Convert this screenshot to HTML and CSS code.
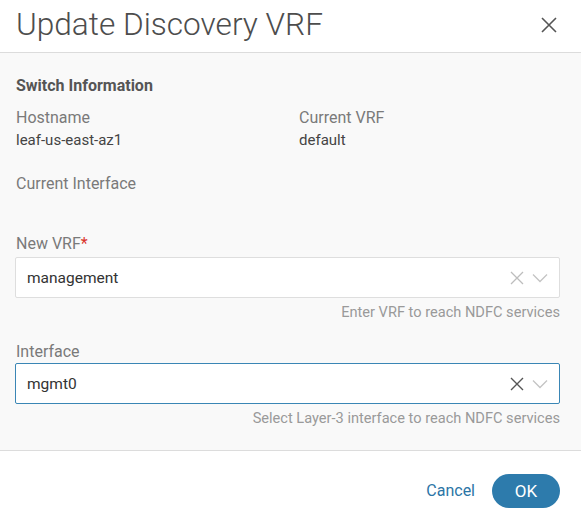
FILE: index.html
```html
<!DOCTYPE html>
<html>
<head>
<meta charset="utf-8">
<link rel="stylesheet" href="styles.css">
</head>
<body>
<div class="modal">
  <div class="header">
    <div class="title">Update Discovery VRF</div>
    <svg class="close" width="16" height="16" viewBox="0 0 16 16"><path d="M1 1L15 15M15 1L1 15" stroke="#555" stroke-width="1.6" fill="none"/></svg>
  </div>
  <div class="body">
    <div class="section-title">Switch Information</div>
    <div class="info-grid">
      <div class="field">
        <div class="label">Hostname</div>
        <div class="value">leaf-us-east-az1</div>
      </div>
      <div class="field">
        <div class="label">Current VRF</div>
        <div class="value">default</div>
      </div>
      <div class="field">
        <div class="label">Current Interface</div>
        <div class="value"></div>
      </div>
    </div>
    <div class="form-group first">
      <div class="label">New VRF<span class="req">*</span></div>
      <div class="select">
        <span class="sel-text">management</span>
        <span class="icons">
          <svg width="14" height="14" viewBox="0 0 14 14"><path d="M1 1L13 13M13 1L1 13" stroke="#bdbdbd" stroke-width="1.3" fill="none"/></svg>
          <svg width="16" height="10" viewBox="0 0 16 10"><path d="M1 1.5L8 8.5L15 1.5" stroke="#c4c4c4" stroke-width="1.3" fill="none"/></svg>
        </span>
      </div>
      <div class="help">Enter VRF to reach NDFC services</div>
    </div>
    <div class="form-group second">
      <div class="label">Interface</div>
      <div class="select focused">
        <span class="sel-text">mgmt0</span>
        <span class="icons">
          <svg width="14" height="14" viewBox="0 0 14 14"><path d="M1 1L13 13M13 1L1 13" stroke="#555" stroke-width="1.4" fill="none"/></svg>
          <svg width="16" height="10" viewBox="0 0 16 10"><path d="M1 1.5L8 8.5L15 1.5" stroke="#c4c4c4" stroke-width="1.3" fill="none"/></svg>
        </span>
      </div>
      <div class="help">Select Layer-3 interface to reach NDFC services</div>
    </div>
  </div>
  <div class="footer">
    <span class="cancel">Cancel</span>
    <span class="ok">OK</span>
  </div>
</div>
</body>
</html>
```
FILE: styles.css
```css
html, body {
  margin: 0;
  padding: 0;
  background: #fff;
}
body {
  font-family: Roboto, "Liberation Sans", Arial, sans-serif;
  color: #444;
}
.modal {
  width: 581px;
  height: 516px;
  display: flex;
  flex-direction: column;
}
.header {
  height: 52px;
  border-bottom: 1px solid #dcdcdc;
  display: flex;
  align-items: center;
  justify-content: space-between;
  padding: 0 24px 0 16px;
  box-sizing: content-box;
  flex: none;
}
.title {
  font-size: 31.6px;
  font-weight: 300;
  color: #4d4d4d;
  margin-top: -3px;
}
.close {
  margin-top: -2px;
}
.body {
  background: #f9f9f9;
  height: 397px;
  padding: 23px 21px 0 15px;
  box-sizing: border-box;
  flex: none;
}
.section-title {
  font-size: 16px;
  font-weight: 700;
  color: #555;
  line-height: 20px;
  padding-left: 1px;
}
.info-grid {
  display: grid;
  grid-template-columns: 283px 1fr;
  row-gap: 0;
  margin-top: 11px;
  padding-left: 1px;
}
.field {
  height: 66px;
}
.label {
  font-size: 16px;
  color: #7a7a7a;
  line-height: 22px;
}
.value {
  font-size: 15px;
  color: #444;
  line-height: 22px;
}
.req {
  color: #d9342b;
}
.form-group .label {
  padding-left: 1px;
  margin-bottom: 2px;
}
.form-group.first {
  margin-top: -6px;
}
.form-group.second {
  margin-top: 19px;
}
.form-group.second .label {
  margin-bottom: 0;
}
.select {
  height: 41px;
  box-sizing: border-box;
  background: #fff;
  border: 1px solid #dedede;
  border-radius: 2px;
  display: flex;
  align-items: center;
  justify-content: space-between;
  padding: 0 11px 0 11px;
}
.select.focused {
  border-color: #3a86b5;
}
.sel-text {
  font-size: 15.5px;
  color: #333;
}
.icons {
  display: flex;
  align-items: center;
  gap: 8px;
}
.help {
  text-align: right;
  font-size: 14.6px;
  color: #9a9a9a;
  line-height: 20px;
  margin-top: 4px;
}
.footer {
  flex: 1;
  border-top: 1px solid #dcdcdc;
  display: flex;
  align-items: center;
  justify-content: flex-end;
  padding: 14px 21px 0 0;
  gap: 17px;
}
.cancel {
  font-size: 16px;
  color: #2b75a6;
}
.ok {
  width: 68px;
  height: 34px;
  border-radius: 17px;
  background: #2d7bac;
  color: #fff;
  font-size: 17px;
  display: flex;
  align-items: center;
  justify-content: center;
}
```
